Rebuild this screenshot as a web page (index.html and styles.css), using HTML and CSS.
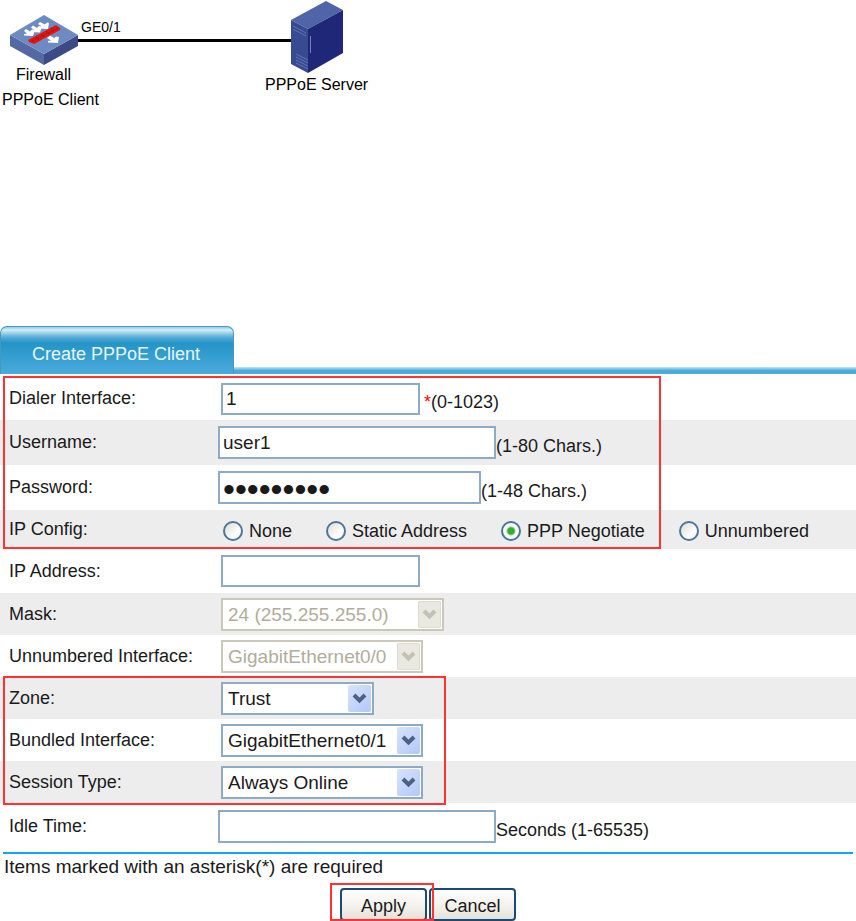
FILE: index.html
```html
<!DOCTYPE html>
<html lang="en">
  <head>
    <meta charset="UTF-8" />
    <meta name="viewport" content="width=device-width, initial-scale=1.0" />
    <title>Create PPPoE Client</title>
    <link rel="stylesheet" href="styles.css" />
  </head>
  <body>
    <div class="diagram">
      <svg width="380" height="110" viewBox="0 0 380 110">
        <!-- link -->
        <path d="M76 40.500H294" stroke="#000" stroke-width="3" />

        <!-- firewall -->
        <path d="M10 35L44 54V65L10 46Z" fill="#5468a4" />
        <path d="M78 35L44 54V65L78 46Z" fill="#3d4a85" />
        <path d="M44 15L78 35L44 54L10 35Z" fill="#6d8ac2" />
        <g fill="#fff">
          <path d="M26 29L30 31.500L32 29.500L35 30L33 36L24 35.500L24 34L27 33.500L24 31Z" />
          <path d="M33 25.500L37 28L39 26L42 26.500L40 32.500L31 32L31 30.500L34 30L31 27.500Z" />
          <path d="M40 22L45 24.500L47 22.500L49 23L48 29L38 28.500L38 27L42 26.500L38 24Z" />
          <path d="M50 35.500L54 38L56 36.500L59 37L58 43L48 42.500L48 41L51 40.500L47 38Z" />
        </g>
        <path d="M28 40L56 25L60 28V30L34 44L29 42Z" fill="#e5140f" />
        <path d="M32 41L58 28M36 37l3 3M41 34l3 3M46 31l3 3M51 28l3 3" stroke="#991713" stroke-dasharray="2 1" fill="none" />

        <!-- server -->
        <path d="M291 20L326 1L343 10L308 29Z" fill="#5064a8" />
        <path d="M291 20L308 29V73L291 64Z" fill="#384a90" />
        <path d="M308 29L343 10V53L308 73Z" fill="#1f2878" />
        <path d="M293 26l13 7M293 29l13 7M296 54l12 6M296 57l12 6M296 60l12 6M296 63l12 6" stroke="#6075b5" fill="none" />
        <path d="M310.500 36v17" stroke="#7183bd" />

        <text class="port" x="81" y="32">GE0/1</text>
        <text x="16" y="80">Firewall</text>
        <text x="2" y="105">PPPoE Client</text>
        <text x="265" y="90">PPPoE Server</text>
      </svg>
    </div>

    <div class="tabs">
      <a class="tab" href="#">Create PPPoE Client</a>
    </div>

    <form>
      <div class="group group-main">
        <div class="row row-first">
          <label for="dialer">Dialer Interface:</label>
          <div class="field">
            <input type="text" id="dialer" value="1" />
            <span class="hint hint-required"><span class="star">*</span>(0-1023)</span>
          </div>
        </div>
        <div class="row tall shade">
          <label for="username">Username:</label>
          <div class="field flush">
            <input type="text" id="username" class="wide" value="user1" />
            <span class="hint">(1-80 Chars.)</span>
          </div>
        </div>
        <div class="row tall">
          <label for="password">Password:</label>
          <div class="field flush">
            <input type="password" id="password" value="password1" />
            <span class="hint">(1-48 Chars.)</span>
          </div>
        </div>
        <div class="row row-radio shade" role="radiogroup" aria-labelledby="ipConfig">
          <span class="label" id="ipConfig">IP Config:</span>
          <div class="field radios">
            <label><input type="radio" name="ipconfig" />None</label>
            <label><input type="radio" name="ipconfig" />Static Address</label>
            <label><input type="radio" name="ipconfig" checked />PPP Negotiate</label>
            <label><input type="radio" name="ipconfig" />Unnumbered</label>
          </div>
        </div>
      </div>

      <div class="row row-address">
        <label for="address">IP Address:</label>
        <div class="field"><input type="text" id="address" /></div>
      </div>
      <div class="row shade">
        <label for="mask">Mask:</label>
        <div class="field">
          <div class="select select-mask">
            <select id="mask" disabled><option>24 (255.255.255.0)</option></select>
            <svg class="arrow" viewBox="0 0 23 27"><path d="M6 10l5.500 5.500l5.500-5.500" /></svg>
          </div>
        </div>
      </div>
      <div class="row">
        <label for="unnumbered">Unnumbered Interface:</label>
        <div class="field">
          <div class="select">
            <select id="unnumbered" disabled><option>GigabitEthernet0/0</option></select>
            <svg class="arrow" viewBox="0 0 23 27"><path d="M6 10l5.500 5.500l5.500-5.500" /></svg>
          </div>
        </div>
      </div>

      <div class="group group-zone">
        <div class="row shade">
          <label for="zone">Zone:</label>
          <div class="field">
            <div class="select select-zone">
              <select id="zone"><option>Trust</option></select>
              <svg class="arrow" viewBox="0 0 23 27"><path d="M6 10l5.500 5.500l5.500-5.500" /></svg>
            </div>
          </div>
        </div>
        <div class="row">
          <label for="bundled">Bundled Interface:</label>
          <div class="field">
            <div class="select">
              <select id="bundled"><option>GigabitEthernet0/1</option></select>
              <svg class="arrow" viewBox="0 0 23 27"><path d="M6 10l5.500 5.500l5.500-5.500" /></svg>
            </div>
          </div>
        </div>
        <div class="row shade">
          <label for="session">Session Type:</label>
          <div class="field">
            <div class="select">
              <select id="session"><option>Always Online</option></select>
              <svg class="arrow" viewBox="0 0 23 27"><path d="M6 10l5.500 5.500l5.500-5.500" /></svg>
            </div>
          </div>
        </div>
      </div>

      <div class="row row-idle">
        <label for="idle">Idle Time:</label>
        <div class="field flush">
          <input type="text" id="idle" class="wide" />
          <span class="hint">Seconds (1-65535)</span>
        </div>
      </div>

      <p class="note">Items marked with an asterisk(*) are required</p>
      <div class="buttons">
        <span class="marked"><button type="button">Apply</button></span>
        <button type="button">Cancel</button>
      </div>
    </form>
  </body>
</html>
```

FILE: styles.css
```css
*,
*::after {
  box-sizing: border-box;
}
body {
  margin: 0;
  background: #fff;
  color: #1a1a1a;
  font-family: "Liberation Sans", Arial, sans-serif;
  font-size: 18px;
}
input,
select,
button {
  font-family: inherit;
  font-size: 19px;
  color: #1a1a1a;
}

/* network diagram */
.diagram {
  height: 326px;
}
.diagram svg {
  display: block;
}
.diagram text {
  font-size: 16px;
  fill: #000;
}
.diagram .port {
  font-size: 14px;
}

/* tab bar */
.tabs {
  display: flex;
  background: linear-gradient(#c4e6f5, #4aabdc 50%) bottom / 100% 7px no-repeat;
}
.tab {
  width: 234px;
  height: 48px;
  padding-left: 31px;
  border: 1px solid #4798bd;
  border-bottom: 0;
  border-radius: 7px 7px 0 0;
  background: linear-gradient(#8fcbe6 0, #d3eef9 3px, #59aed6 10px, #2494c8 16px, #4babdb 100%);
  color: #e8f7ff;
  line-height: 54px;
  text-decoration: none;
}

/* form rows */
.row {
  display: flex;
  align-items: center;
  height: 42px;
}
.row > label,
.row > .label {
  width: 221px;
  padding-left: 9px;
  flex-shrink: 0;
}
.shade {
  background: #ededed;
}
.row-first {
  height: 46px;
  padding-top: 3px;
}
.tall {
  height: 45px;
}
.row-radio {
  height: 39px;
}
.row-address {
  height: 44px;
}
.row-idle {
  height: 49px;
  padding-bottom: 3px;
}
.field {
  display: flex;
  align-items: center;
}
.flush {
  margin-left: -3px;
}
.hint {
  padding-top: 8px;
}
.hint-required {
  padding-left: 4px;
}
.star {
  color: #f00;
}

input[type="text"],
input[type="password"] {
  width: 199px;
  height: 32px;
  padding: 0 3px;
  border: 2px solid #8eabc6;
  border-radius: 0;
  background: #fff;
}
input.wide {
  width: 278px;
  height: 33px;
}
input[type="password"] {
  width: 263px;
  height: 33px;
  padding-top: 4px;
  font-size: 34px;
}

.radios {
  gap: 34px;
  padding: 3px 0 0 2px;
}
.radios label {
  display: flex;
  align-items: center;
  gap: 6px;
}
input[type="radio"] {
  appearance: none;
  width: 20px;
  height: 20px;
  margin: 0;
  border: 2px solid #4b7698;
  border-radius: 50%;
  background: linear-gradient(135deg, #dcdcd7, #fff 70%);
}
input[type="radio"]:checked {
  background: radial-gradient(circle, #2fae2f 3px, #f8f8f6 5px);
}

/* drop-downs */
.select {
  position: relative;
  width: 202px;
}
.select-mask {
  width: 223px;
}
.select-zone {
  width: 153px;
}
select {
  appearance: none;
  display: block;
  width: 100%;
  height: 33px;
  padding: 0 4px 0 5px;
  border: 2px solid #8eabc6;
  border-radius: 0;
  background: #fff;
}
select:disabled {
  border-color: #cbc8b9;
  background: #fff;
  color: #b1ad9d;
  opacity: 1;
}
.arrow {
  position: absolute;
  top: 3px;
  right: 3px;
  width: 23px;
  height: 27px;
  border-radius: 2px;
  background: linear-gradient(135deg, #d8e3fc, #b3c8f8);
  pointer-events: none;
}
.arrow path {
  fill: none;
  stroke: #4c6185;
  stroke-width: 4;
}
select:disabled + .arrow {
  background: #e9e8e1;
  box-shadow: inset 0 0 0 1px #dddcd2;
}
select:disabled + .arrow path {
  stroke: #c3c1b4;
}

/* red frames */
.group,
.marked {
  position: relative;
}
.group::after,
.marked::after {
  content: "";
  position: absolute;
  border: 2px solid #f33;
  pointer-events: none;
}
.group-main::after {
  top: 2px;
  left: 3px;
  bottom: 0;
  width: 658px;
}
.group-zone::after {
  top: -1px;
  left: 3px;
  bottom: -2px;
  width: 443px;
}
.marked::after {
  inset: -5px -7px 0 -10px;
}

.note {
  margin: 0 3px;
  padding-left: 1px;
  border-top: 2px solid #10a5fa;
  font-size: 19px;
  line-height: 26px;
}
.buttons {
  display: flex;
  justify-content: center;
  gap: 2px;
  padding-top: 8px;
}
button {
  display: block;
  width: 87px;
  height: 33px;
  padding: 4px 0 0;
  border: 2px solid #1b4a78;
  border-radius: 4px;
  background: linear-gradient(#fff, #f1f0ea 60%, #e4e2d8);
  font-size: 18px;
}
```
